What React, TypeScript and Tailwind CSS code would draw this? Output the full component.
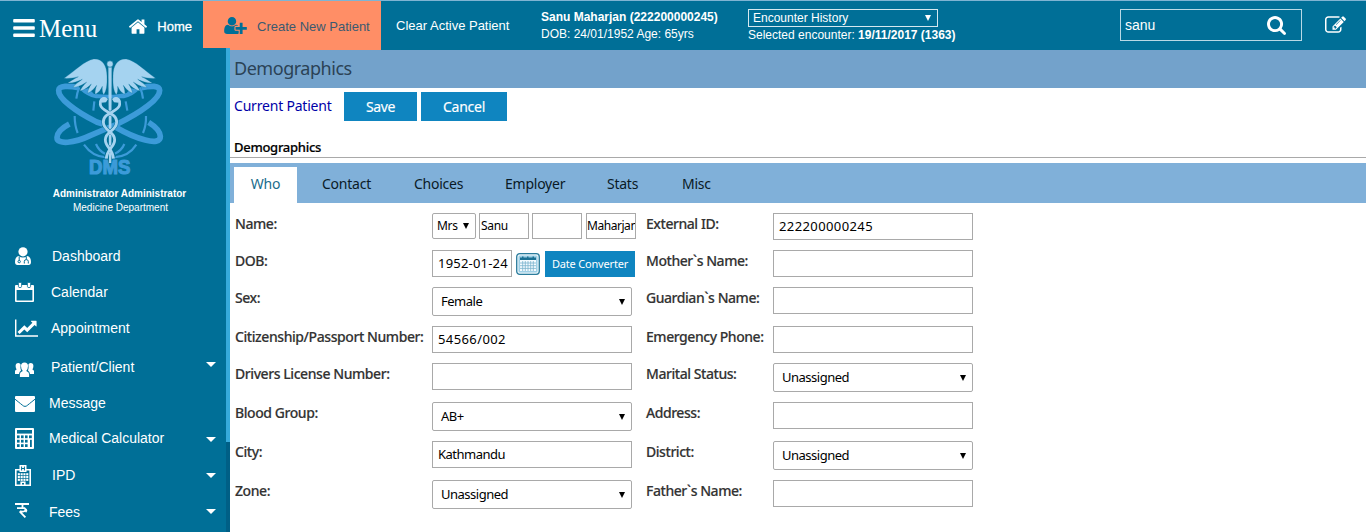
import React from "react";

type IconProps = { d: string; box?: string; className: string };
const Icon = ({ d, box = "0 0 1792 1792", className }: IconProps) => (
  <svg viewBox={box} className={`shrink-0 fill-current ${className}`} aria-hidden="true">
    <path d={d} />
  </svg>
);

const HOME =
  "M1472 992v480q0 26-19 45t-45 19h-384v-384h-256v384h-384q-26 0-45-19t-19-45v-480q0-1 .5-3t.5-3l575-474 575 474q1 2 1 6zm223-69l-62 74q-8 9-21 11h-3q-13 0-21-7l-692-577-692 577q-12 8-24 7-13-2-21-11l-62-74q-8-10-7-23.5t11-21.5l719-599q32-26 76-26t76 26l244 204v-195q0-14 9-23t23-9h192q14 0 23 9t9 23v408l219 182q10 8 11 21.5t-7 23.5z";
const BARS =
  "M1664 1344v128q0 26-19 45t-45 19h-1408q-26 0-45-19t-19-45v-128q0-26 19-45t45-19h1408q26 0 45 19t19 45zm0-512v128q0 26-19 45t-45 19h-1408q-26 0-45-19t-19-45v-128q0-26 19-45t45-19h1408q26 0 45 19t19 45zm0-512v128q0 26-19 45t-45 19h-1408q-26 0-45-19t-19-45v-128q0-26 19-45t45-19h1408q26 0 45 19t19 45z";
const SEARCH =
  "M1216 832q0-185-131.5-316.5t-316.5-131.5-316.5 131.5-131.5 316.5 131.5 316.5 316.5 131.5 316.5-131.5 131.5-316.5zm512 832q0 52-38 90t-90 38q-54 0-90-38l-343-342q-179 124-399 124-143 0-273.5-55.5t-225-150-150-225-55.5-273.5 55.5-273.5 150-225 225-150 273.5-55.5 273.5 55.5 225 150 150 225 55.5 273.5q0 220-124 399l343 343q37 37 37 90z";
const EDIT =
  "M888 1184l116-116-152-152-116 116v56h96v96h56zm440-720q-16-16-33 1l-350 350q-17 17-1 33t33-1l350-350q17-17 1-33zm80 594v190q0 119-84.5 203.5t-203.5 84.5h-832q-119 0-203.5-84.5t-84.5-203.5v-832q0-119 84.5-203.5t203.5-84.5h832q63 0 117 25 15 7 18 23 3 17-9 29l-49 49q-14 14-32 8-23-6-45-6h-832q-66 0-113 47t-47 113v832q0 66 47 113t113 47h832q66 0 113-47t47-113v-126q0-13 9-22l64-64q15-15 35-7t20 29zm-96-738l288 288-672 672h-288v-288zm444 132l-92 92-288-288 92-92q28-28 68-28t68 28l152 152q28 28 28 68t-28 68z";
const USER_PLUS =
  "M704 896q-159 0-271.5-112.5t-112.5-271.5 112.5-271.5 271.5-112.5 271.5 112.5 112.5 271.5-112.5 271.5-271.5 112.5zm960 128h352q13 0 22.5 9.5t9.5 22.5v192q0 13-9.5 22.5t-22.5 9.5h-352v352q0 13-9.5 22.5t-22.5 9.5h-192q-13 0-22.5-9.5t-9.5-22.5v-352h-352q-13 0-22.5-9.5t-9.5-22.5v-192q0-13 9.5-22.5t22.5-9.5h352v-352q0-13 9.5-22.5t22.5-9.5h192q13 0 22.5 9.5t9.5 22.5v352zm-736 224q0 52 38 90t90 38h256v238q-68 50-171 50h-874q-121 0-194-69t-73-190q0-53 3.5-103.5t14-109 26.5-108.5 43-97.5 62-81 85.5-53.5 111.5-20q19 0 39 17 79 61 154.5 91.5t164.5 30.5 164.5-30.5 154.5-91.5q20-17 39-17 132 0 217 96h-223q-52 0-90 38t-38 90v192z";
const LINE_CHART =
  "M2048 1536v128h-2048v-1536h128v1408h1920zm-128-1248v435q0 21-19.5 29.5t-35.5-7.5l-121-121-633 633q-10 10-23 10t-23-10l-233-233-416 416-192-192 585-585q10-10 23-10t23 10l233 233 464-464-121-121q-16-16-7.5-35.5t29.5-19.5h435q14 0 23 9t9 23z";

const Logo = () => (
  <svg viewBox="159 27 333 357" className="block h-[119px] w-[111px] overflow-visible" aria-label="DMS">
    <g fill="none" stroke="#3c9bd9" strokeLinecap="butt">
      <g strokeWidth="6.500">
        <path d="M238 118Q231 134 229 152" />
        <path d="M420 118Q427 134 429 152" />
        <path d="M224 204Q224 232 233 255" />
        <path d="M438 204Q439 232 429 255" />
        <path d="M252 290Q277 326 318 328" />
        <path d="M409 290Q386 326 342 328" />
        <path d="M288 288Q296 308 316 318" />
        <path d="M373 288Q365 308 343 318" />
        <path d="M283 160L280 188M377 160L382 188" />
      </g>
      <path
        strokeWidth="17"
        d="M236 119C207 113 177 112 176 127C174 150 225 190 290 222L309 228"
      />
      <path
        strokeWidth="17"
        d="M424 119C453 113 478 112 479 127C480 152 425 192 352 228L270 263C225 285 170 292 171 268C172 252 187 239 208 228"
      />
      <path
        strokeWidth="17"
        d="M346 237C404 271 482 298 481 265C480 250 464 234 446 223"
      />
    </g>
    <path fill="#3c9bd9" d="M240 125L265 121L282 138L322 140H342L380 135L392 121L417 125Q402 142 372 151H288Q258 143 240 125Z" />
    <g fill="#a5d3f0" stroke="#006f97" strokeWidth=".8">
      <path d="M321 84C321 52 307 31 281 33C253 38 226 68 192 91C210 92 224 89 235 86C220 94 211 99 203 105C220 106 235 100 247 94C234 103 225 110 219 118C235 118 250 109 260 102C250 112 243 121 240 129C255 126 266 116 274 108C267 119 263 128 263 136C276 131 285 119 290 112C286 124 284 132 286 139C298 134 304 122 307 115C306 126 307 135 311 140C319 130 322 113 321 84Z" />
      <path d="M339 84C339 52 353 31 379 33C407 38 434 68 467 91C450 92 436 89 425 86C440 94 449 99 457 105C440 106 425 100 413 94C426 103 435 110 441 118C425 118 410 109 400 102C410 112 417 121 420 129C405 126 394 116 386 108C393 119 397 128 397 136C384 131 375 119 370 112C374 124 376 132 374 139C362 134 356 122 353 115C354 126 353 135 349 140C341 130 338 113 339 84Z" />
    </g>
    <text
      x="267"
      y="379"
      textLength="124"
      lengthAdjust="spacingAndGlyphs"
      className="fill-[#3c9bd9] stroke-[#3c9bd9] [stroke-width:3.5px] font-['Liberation_Sans',sans-serif] text-[62px] font-bold"
    >
      DMS
    </text>
    <path fill="#a5d3f0" d="M325 58H335L334 345H327Z" />
    <circle cx="330" cy="48" r="9.500" fill="#a5d3f0" stroke="#006f97" strokeWidth="1.500" />
    <g fill="none" stroke="#006f97" strokeWidth="11">
      <path d="M303 164C296 192 350 190 350 222C350 250 315 248 315 275C315 298 342 302 342 328" />
      <path d="M357 164C364 192 310 190 310 222C310 250 345 248 345 275C345 298 320 302 318 328" />
    </g>
    <g fill="none" stroke="#a5d3f0" strokeWidth="8.500">
      <path d="M318 154C305 148 299 158 301 170C304 193 350 192 350 222C350 250 316 248 316 275C316 298 339 302 340 332" />
      <path d="M342 154C355 148 361 158 359 170C356 193 310 192 310 222C310 250 344 248 344 275C344 298 321 302 319 332" />
    </g>
    <path fill="#a5d3f0" d="M302 152Q312 141 324 153L318 163L304 164ZM358 152Q348 141 336 153L342 163L356 164Z" />
  </svg>
);

const DoctorIcon = () => (
  <svg viewBox="0 0 16 18" className="h-[18px] w-[16px]">
    <circle cx="8" cy="4.8" r="4.6" fill="#fff" />
    <path fill="#fff" d="M3.5 9Q8 12 12.5 9Q16 10 16 15Q16 18 13.5 18H2.5Q0 18 0 15Q0 10 3.5 9Z" />
    <path fill="none" stroke="#006f97" strokeWidth="1" d="M4.2 9.6V13M9.3 16.5V14.4Q9.3 12.6 11.3 12.6T13.3 14.4V16.5M11.3 12.4V9.6" />
    <circle cx="4.2" cy="14.6" r="1.2" fill="none" stroke="#006f97" />
  </svg>
);

const CalendarIcon = () => (
  <svg viewBox="0 0 19 20" className="h-[20px] w-[19px]">
    <path fill="#fff" fillRule="evenodd" d="M1 3H18Q19 3 19 4V19Q19 20 18 20H1Q0 20 0 19V4Q0 3 1 3ZM1.6 8V18.4H17.4V8Z" />
    <path fill="#fff" stroke="#006f97" strokeWidth=".8" d="M3.4 1.6Q3.4 .3 5 .3T6.6 1.6V4.4Q6.6 5.6 5 5.6T3.4 4.4ZM12.4 1.6Q12.4 .3 14 .3T15.6 1.6V4.4Q15.6 5.6 14 5.6T12.4 4.4Z" />
  </svg>
);

const GroupIcon = () => (
  <svg viewBox="0 0 19 15" className="h-[15px] w-[19px] fill-white">
    <path d="M0 12V9Q0 8 1.6 7.4Q.6 6 .6 4Q.6 1 3.4 1Q5.2 1 5.6 2.6Q5 6.5 6 8.4Q4.2 9.6 4 12ZM19 12V9Q19 8 17.4 7.4Q18.4 6 18.4 4Q18.4 1 15.6 1Q13.8 1 13.4 2.6Q14 6.5 13 8.4Q14.800 9.600 15 12Z" />
    <path d="M4.900 15V12Q5 10 7.800 9Q6 7 6 4Q6 .4 9.500 .4T13 4Q13 7 11.200 9Q14 10 14.100 12V15Z" />
  </svg>
);

const MailIcon = () => (
  <svg viewBox="0 0 20 16" className="h-[16px] w-[20px]">
    <rect width="20" height="16" rx="1" fill="#fff" />
    <path d="M0 3.200Q7 8.800 8.300 9.900Q10 11 11.700 9.900Q13 8.800 20 3.200" fill="none" stroke="#006f97" strokeWidth="1" />
  </svg>
);

const CalculatorIcon = () => (
  <svg viewBox="0 0 19 21" className="h-[21px] w-[19px]">
    <rect width="19" height="21" rx="1" fill="#fff" />
    <g fill="#006f97">
      <rect x="2" y="2" width="15" height="3.600" />
      {[7.4, 11.8, 16.2].map((y) => [2, 6, 10].map((x) => <rect key={`${x}-${y}`} x={x} y={y} width="2.600" height="2.800" />))}
      <rect x="14" y="7.400" width="2.800" height="2.800" />
      <rect x="15" y="11.800" width="1.800" height="7.200" />
    </g>
  </svg>
);

const HospitalIcon = () => (
  <svg viewBox="0 0 16 21" className="h-[21px] w-[16px]">
    <path fill="none" stroke="#fff" strokeWidth="1.600" d="M5 4.800H.8V20.200H15.200V4.800H11" />
    <path fill="#fff" d="M4.500 0H11.500V7H4.500Z" />
    <path fill="none" stroke="#006f97" strokeWidth="1" d="M6.600 1.500V5.500M9.400 1.500V5.500M6.600 3.500H9.400" />
    <g fill="#fff">
      {[8.2, 11, 13.8].map((y) => [2.8, 5.6, 8.4, 11.2].map((x) => <rect key={`${x}-${y}`} x={x} y={y} width="2.100" height="2.100" />))}
      <path d="M5.400 16.600H10.600V20H9V18H7V20H5.400Z" />
    </g>
  </svg>
);

const RupeeIcon = () => (
  <svg viewBox="0 0 14 15" className="h-[15px] w-[14px]">
    <path fill="none" stroke="#fff" strokeWidth="1.800" d="M0 1H14M7.500 1V5.600M2 5.200H9.600Q11.300 6.500 9.800 8Q7.500 9.300 5.200 7.900M4.600 8.300L10.400 14.400M10 5.600Q12.500 7.500 10.500 9" />
  </svg>
);

const menu = [
  { label: "Dashboard", icon: <DoctorIcon />, row: "h-[36px]", box: "w-[37px]", caret: "" },
  { label: "Calendar", icon: <CalendarIcon />, row: "h-[36px]", box: "w-[36px]", caret: "" },
  {
    label: "Appointment",
    icon: <Icon d={LINE_CHART} box="0 128 2048 1536" className="h-[18px] w-[23px]" />,
    row: "h-[36px]",
    box: "w-[36px]",
    caret: "",
  },
  { label: "Patient/Client", icon: <GroupIcon />, row: "h-[41px] pt-[2px]", box: "w-[36px] pt-[3px]", caret: "mb-[6px]" },
  { label: "Message", icon: <MailIcon />, row: "h-[33px]", box: "w-[34px]", caret: "" },
  { label: "Medical Calculator", icon: <CalculatorIcon />, row: "h-[37px]", box: "w-[34px]", caret: "mt-px" },
  { label: "IPD", icon: <HospitalIcon />, row: "h-[36px]", box: "w-[37px]", caret: "mt-px" },
  { label: "Fees", icon: <RupeeIcon />, row: "h-[38px]", box: "w-[34px] pb-[4px]", caret: "mb-px" },
];

const Sidebar = () => (
  <aside className="relative -mt-[2px] flex h-[484px] w-[230px] shrink-0 bg-[#006f97] font-['Liberation_Sans',sans-serif] text-white">
    <div className="w-[226px]">
      <div className="pt-[9px] pl-[53px]">
        <Logo />
      </div>
      <div className="mt-[11px] pl-[13px] text-center text-[10px] leading-[14px]">
        <div className="font-bold">Administrator Administrator</div>
        <div className="pl-[2px]">Medicine Department</div>
      </div>
      <ul className="mt-[23px]">
        {menu.map((m) => (
          <li key={m.label} className={`flex items-center pr-[10px] pl-[15px] text-[14px] ${m.row}`}>
            <span className={`flex shrink-0 ${m.box}`}>{m.icon}</span>
            <span className="grow whitespace-nowrap">{m.label}</span>
            {m.caret && (
              <svg viewBox="0 0 10 5" className={`h-[5px] w-[10px] fill-white ${m.caret}`}>
                <path d="M0 0H10L5 5Z" />
              </svg>
            )}
          </li>
        ))}
      </ul>
    </div>
    <div className="w-[4px] bg-[#005f86]">
      <div className="h-[394px] bg-[#36aadb]" />
    </div>
  </aside>
);

const Header = () => (
  <header className="flex h-[50px] border-t border-[#7fb4d3] bg-[#006f97] font-['Liberation_Sans',sans-serif] text-[13px] text-white">
    <div className="flex w-[203px] shrink-0 items-center pl-[11px]">
      <Icon d={BARS} box="128 256 1536 1280" className="mt-[5px] ml-[2px] h-[18px] w-[22px]" />
      <span className="mt-[7px] ml-[4px] font-['Liberation_Serif',serif] text-[25px] leading-[30px]">Menu</span>
      <Icon d={HOME} box="89 253 1614 1283" className="mt-[1px] ml-[32px] h-[15px] w-[18px]" />
      <span className="mt-[2px] ml-[10px] [-webkit-text-stroke:0.3px_white]">Home</span>
    </div>
    <div className="flex w-[178px] shrink-0 items-center bg-[#ff8e66] pl-[21px] text-[#3b5a70]">
      <Icon d={USER_PLUS} box="0 128 2048 1536" className="h-[17px] w-[23px] text-[#006f97]" />
      <span className="mt-[2px] ml-[10px] whitespace-nowrap">Create New Patient</span>
    </div>
    <div className="mt-[17px] ml-[15px] w-[145px] shrink-0 whitespace-nowrap leading-[16px]">Clear Active Patient</div>
    <div className="mt-[8px] w-[207px] shrink-0 text-[12px] leading-[17px] whitespace-nowrap">
      <div className="font-bold">Sanu Maharjan (222200000245)</div>
      <div>DOB: 24/01/1952 Age: 65yrs</div>
    </div>
    <div className="mt-[8px] shrink-0 text-[12px] whitespace-nowrap">
      <div className="flex h-[18px] w-[190px] items-center justify-between border border-[#d5e8f0] pr-[6px] pl-[4px]">
        <span>Encounter History</span>
        <svg viewBox="0 0 6 6" className="h-[6px] w-[6px] fill-white">
          <path d="M0 0H6L3 6Z" />
        </svg>
      </div>
      <div className="leading-[16px]">
        Selected encounter: <b>19/11/2017 (1363)</b>
      </div>
    </div>
    <div className="mt-[8px] ml-auto flex h-[32px] w-[182px] items-center justify-between border border-[#b9d9e6] pr-[15px] pl-[4px] text-[14px]">
      <span>sanu</span>
      <Icon d={SEARCH} box="64 128 1664 1664" className="mt-[1px] h-[19px] w-[19px]" />
    </div>
    <Icon d={EDIT} box="0 124 1792 1412" className="mt-[15px] mr-[20px] ml-[23px] h-[17px] w-[21px]" />
  </header>
);

const Caret = () => (
  <svg viewBox="0 0 6 6" className="h-[6px] w-[6px] shrink-0 fill-black">
    <path d="M0 0H6L3 6Z" />
  </svg>
);

const TextBox = ({ value = "", digits = false }: { value?: string; digits?: boolean }) => (
  <div className="h-[27px] w-[200px] border border-[#a9a9a9] bg-white pl-[5px] text-[13px] leading-[25px] text-black">
    <span className={digits ? "tracking-[0.4px]" : "tracking-[-0.5px]"}>{value}</span>
  </div>
);

const SelectBox = ({ value }: { value: string }) => (
  <div className="flex h-[29px] w-[200px] items-center justify-between rounded-[2px] border border-[#a9a9a9] bg-white pr-[6px] pl-[8px] text-[13px] leading-[27px] tracking-[-0.5px] text-black">
    <span>{value}</span>
    <Caret />
  </div>
);

const NameFields = () => (
  <div className="flex h-[26px] text-[12px] leading-[24px] tracking-[-0.3px] text-black">
    <div className="flex w-[44px] items-center justify-between rounded-[2px] border border-[#a9a9a9] pr-[6px] pl-[4px]">
      Mrs
      <Caret />
    </div>
    <div className="ml-[3px] w-[50px] border border-[#a9a9a9] pl-px">Sanu</div>
    <div className="ml-[3px] w-[50px] border border-[#a9a9a9]" />
    <div className="ml-[4px] w-[50px] overflow-hidden border border-[#a9a9a9] tracking-[-0.45px]">Maharjan</div>
  </div>
);

const DobFields = () => (
  <div className="flex h-[27px] items-start">
    <div className="h-[27px] w-[80px] border border-[#a9a9a9] pl-[5px] text-[13px] leading-[25px] tracking-[0.2px] whitespace-nowrap text-black">
      1952-01-24
    </div>
    <svg viewBox="0 0 24 22" className="mt-[3px] ml-[4px] h-[22px] w-[24px]">
      <rect x=".7" y=".7" width="22.600" height="20.600" rx="3" fill="#e8f5fa" stroke="#2b7c9c" strokeWidth="1.300" />
      <rect x="2.500" y="2.500" width="19" height="17" rx="1.500" fill="#9fd0e6" />
      <path fill="#f4fbff" d="M4 7H20V18H4Z" />
      <path fill="#1c7193" d="M4 4.500H6V3.500H7.500V4.500H11V3.500H12.500V4.500H16.500V3.500H18V4.500H20V7H4Z" />
      <path stroke="#79b3cd" strokeWidth=".8" d="M4 10H20M4 12.700H20M4 15.400H20M6.700 8V18M9.300 8V18M12 8V18M14.700 8V18M17.300 8V18" />
    </svg>
    <div className="mt-px ml-[5px] h-[26px] w-[90px] bg-[#0f85c0] text-center text-[11px] leading-[26px] tracking-[-0.18px] text-white">
      Date Converter
    </div>
  </div>
);

const rows: { h: string; left: string; leftField: React.ReactNode; right: string; rightField: React.ReactNode }[] = [
  { h: "h-[37px]", left: "Name:", leftField: <NameFields />, right: "External ID:", rightField: <TextBox value="222200000245" digits /> },
  { h: "h-[37px]", left: "DOB:", leftField: <DobFields />, right: "Mother`s Name:", rightField: <TextBox /> },
  { h: "h-[39px]", left: "Sex:", leftField: <SelectBox value="Female" />, right: "Guardian`s Name:", rightField: <TextBox /> },
  { h: "h-[37px]", left: "Citizenship/Passport Number:", leftField: <TextBox value="54566/002" digits />, right: "Emergency Phone:", rightField: <TextBox /> },
  { h: "h-[39px]", left: "Drivers License Number:", leftField: <TextBox />, right: "Marital Status:", rightField: <SelectBox value="Unassigned" /> },
  { h: "h-[39px]", left: "Blood Group:", leftField: <SelectBox value="AB+" />, right: "Address:", rightField: <TextBox /> },
  { h: "h-[39px]", left: "City:", leftField: <TextBox value="Kathmandu" />, right: "District:", rightField: <SelectBox value="Unassigned" /> },
  { h: "h-[39px]", left: "Zone:", leftField: <SelectBox value="Unassigned" />, right: "Father`s Name:", rightField: <TextBox /> },
];

const tabs = [
  { label: "Contact", w: "w-[92px]" },
  { label: "Choices", w: "w-[91px]" },
  { label: "Employer", w: "w-[102px]" },
  { label: "Stats", w: "w-[75px]" },
  { label: "Misc", w: "w-[60px]" },
];

const Main = () => (
  <main className="min-w-0 grow bg-white">
    <h1 className="h-[38px] bg-[#73a2cb] pl-[4px] text-[18px] leading-[37px] tracking-[-0.47px] text-[#2b4256]">Demographics</h1>
    <div className="flex pt-[4px] pl-[4px] text-[14px] leading-[28px] tracking-[-0.2px]">
      <a className="w-[110px] whitespace-nowrap text-[#0000a8]">Current Patient</a>
      <button className="h-[29px] w-[73px] bg-[#0f85c0] tracking-[-0.35px] text-white [-webkit-text-stroke:0.15px_white]">Save</button>
      <button className="ml-[4px] h-[29px] w-[86px] bg-[#0f85c0] tracking-[-0.27px] text-white [-webkit-text-stroke:0.15px_white]">Cancel</button>
    </div>
    <h2 className="h-[37px] border-b border-[#a9a9a9] pt-[16px] pl-[4px] text-[13px] leading-[20px] font-medium tracking-[-0.28px] text-black [-webkit-text-stroke:0.2px_black]">
      Demographics
    </h2>
    <nav className="mt-[5px] flex h-[40px] bg-[#80b0d9] pt-[4px] pl-[4px] text-[14px] leading-[34px] tracking-[-0.24px] text-[#0a1a26]">
      <div className="mr-[25px] w-[63px] bg-white text-center text-[#1a6d8c]">Who</div>
      {tabs.map((t) => (
        <div key={t.label} className={t.w}>
          {t.label}
        </div>
      ))}
    </nav>
    <div className="pt-[10px] pl-[5px]">
      {rows.map((r) => (
        <div key={r.left} className={`flex ${r.h}`}>
          <div className="w-[197px] shrink-0 text-[14px] leading-[22px] font-medium tracking-[-0.43px] whitespace-nowrap text-[#333] [-webkit-text-stroke:0.15px_#333]">{r.left}</div>
          <div className="w-[214px] shrink-0">{r.leftField}</div>
          <div className="w-[127px] shrink-0 text-[14px] leading-[22px] font-medium tracking-[-0.45px] whitespace-nowrap text-[#333] [-webkit-text-stroke:0.15px_#333]">{r.right}</div>
          <div className="w-[200px] shrink-0">{r.rightField}</div>
        </div>
      ))}
    </div>
  </main>
);

export default function App() {
  return (
    <div className="h-[532px] w-[1366px] overflow-hidden bg-white font-['Noto_Sans',sans-serif]">
      <Header />
      <div className="flex">
        <Sidebar />
        <Main />
      </div>
    </div>
  );
}
